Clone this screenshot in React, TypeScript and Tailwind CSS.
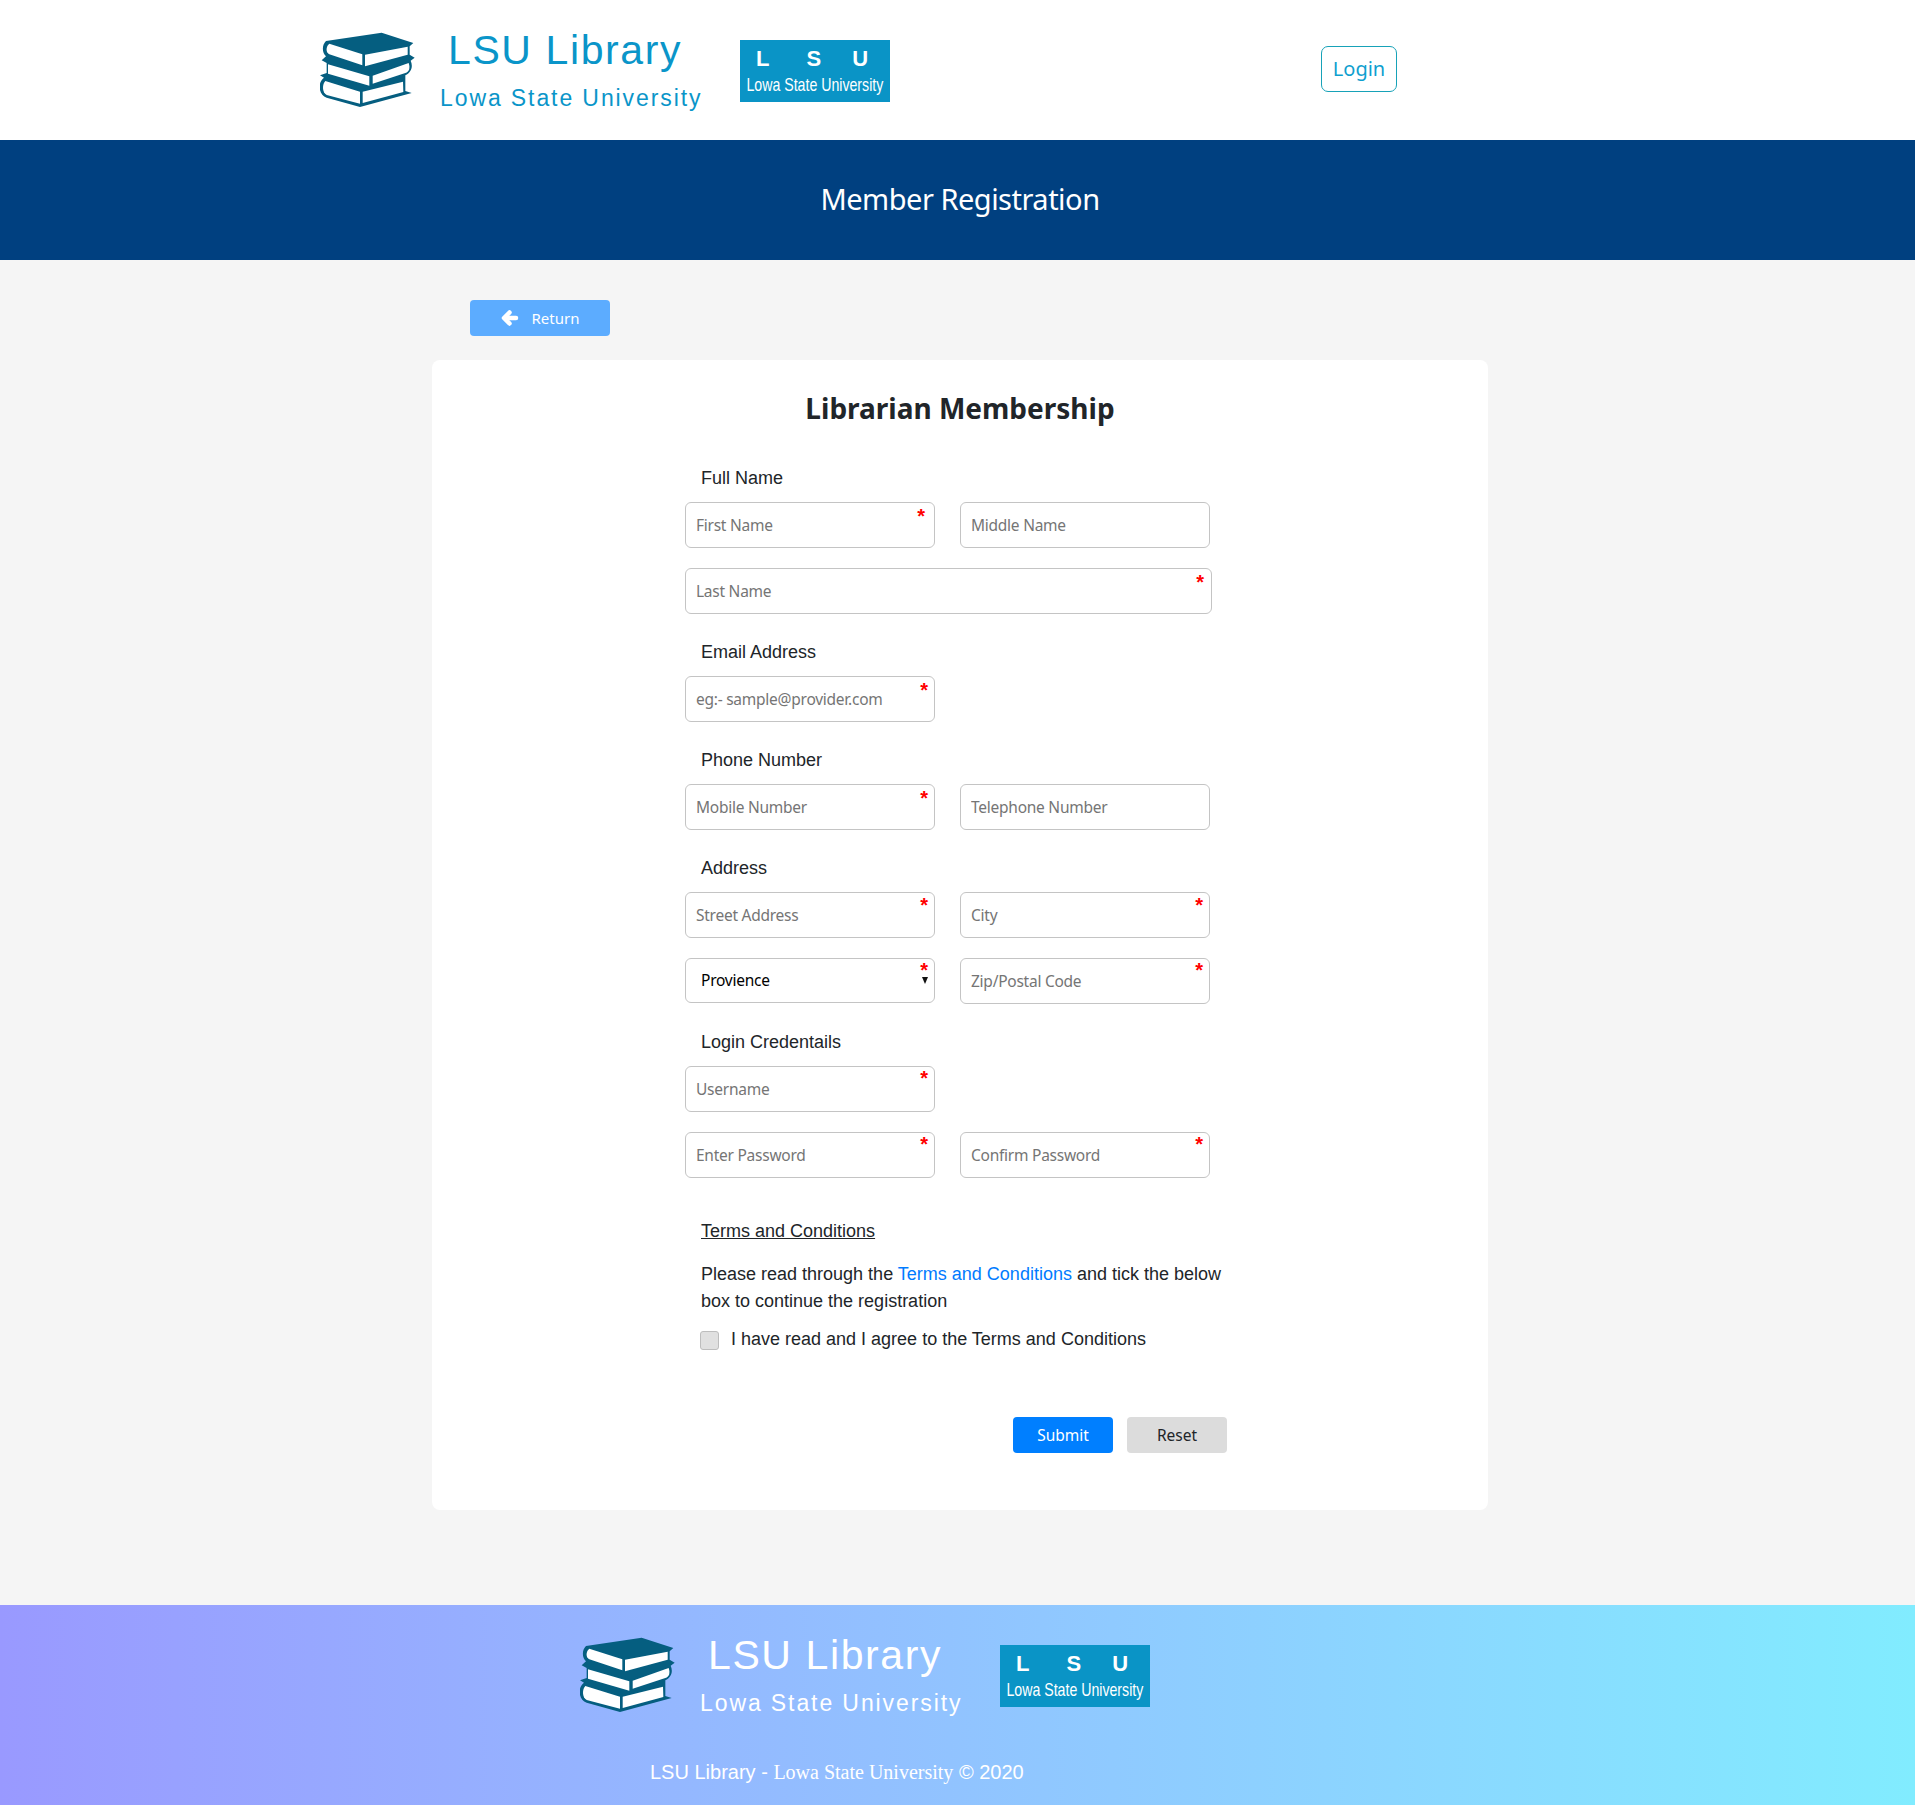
import { useState } from "react";

const uiFont = "font-['Noto_Sans',sans-serif]";
const arial = "font-['Liberation_Sans',sans-serif]";

function BooksIcon() {
  return (
    <svg viewBox="30 35 285 228" className="w-[95px] h-[76px] shrink-0">
      <path
        fill="#055e80"
        d="M48 62 L215 37 L310 68 L299 78 L299 103 L314 112 L302 121 C309 136 306 155 286 165 L286 212 L305 218 L150 260 L50 232 C25 224 22 186 42 172 L30 165 L50 158 L50 128 L35 120 L48 108 C36 98 35 74 48 62 Z"
      />
      <path fill="#fff" d="M58 70 C46 80 48 97 58 102 L157 135 L157 102 Z" />
      <path fill="#fff" d="M165 103 L293 79 L293 103 L165 138 Z" />
      <path fill="#fff" d="M54 132 L178 168 L178 196 L54 160 Z" />
      <path fill="#fff" d="M188 166 L296 128 C301 142 298 154 286 158 L188 190 Z" />
      <path fill="#fff" d="M46 182 L150 214 L150 250 L50 224 C36 216 36 192 46 182 Z" />
      <path fill="#fff" d="M158 214 L279 184 L280 215 L158 248 Z" />
    </svg>
  );
}

function Brand({ light }: { light?: boolean }) {
  const color = light ? "text-white" : "text-[#0a95c9]";
  return (
    <div className={`flex items-center ${arial}`}>
      <BooksIcon />
      <div className={`ml-[25px] w-[265px] pb-[4px] flex flex-col ${color}`}>
        <span className="pl-2 text-[41px] leading-[50px] tracking-[1.6px]">LSU Library</span>
        <span className="mt-[10px] text-[23px] leading-[26px] tracking-[1.9px]">Lowa State University</span>
      </div>
      <div className="ml-[35px] mt-[2px] w-[150px] h-[62px] bg-[#0a94c6] text-white flex flex-col">
        <span className="mt-[6px] pl-[16px] flex text-[22px] leading-[26px] font-bold">
          <span>L</span>
          <span className="ml-[37px]">S</span>
          <span className="ml-[31px]">U</span>
        </span>
        <div className="mt-[1px] flex justify-center">
          <span className="shrink-0 text-[19px] leading-[24px] whitespace-nowrap scale-x-[0.745]">
            Lowa State University
          </span>
        </div>
      </div>
    </div>
  );
}

function Star({ className }: { className: string }) {
  return (
    <span className={`absolute text-[20px] leading-[24px] font-bold text-[#ff0000] ${arial} ${className}`}>*</span>
  );
}

function Field({
  placeholder,
  star,
  wide,
}: {
  placeholder: string;
  star?: string;
  wide?: boolean;
}) {
  return (
    <div className={`relative h-[46px] ${wide ? "w-[527px]" : "w-[250px]"}`}>
      <input
        placeholder={placeholder}
        className={`w-full h-full px-[10px] bg-white border border-[#c4c4c4] rounded-[6px] text-[15.5px] tracking-[-0.25px] text-[#212529] placeholder:text-[#757575] outline-none ${uiFont}`}
      />
      {star && <Star className={star} />}
    </div>
  );
}

function ProvinceSelect() {
  return (
    <div className="relative h-[45px] w-[250px]">
      <select
        defaultValue=""
        className={`w-full h-full pl-[15px] bg-white border border-[#c4c4c4] rounded-[6px] text-[15.5px] tracking-[-0.25px] text-black appearance-none outline-none ${uiFont}`}
      >
        <option value="">Provience</option>
      </select>
      <Star className="right-[7px] top-0" />
      <svg viewBox="0 0 6 7" className="absolute right-[7px] top-[19px] w-[6px] h-[7px]">
        <path d="M0 0 H6 L3 7 Z" fill="#111" />
      </svg>
    </div>
  );
}

function SectionLabel({ children, className }: { children: string; className: string }) {
  return <div className={`pl-[16px] text-[18px] leading-[24px] text-[#212529] ${arial} ${className}`}>{children}</div>;
}

export default function App() {
  const [agreed, setAgreed] = useState(false);

  return (
    <div className="w-full min-h-[1805px] bg-[#f5f5f5]">
      {/* top bar */}
      <header className="h-[140px] bg-white flex items-center pl-[320px]">
        <Brand />
        <button
          className={`ml-[431px] mb-[2px] w-[76px] h-[46px] bg-white border border-[#17a2b8] rounded-[7px] text-[20px] text-[#0f9fcf] ${uiFont}`}
        >
          Login
        </button>
      </header>

      <div
        className={`h-[120px] pl-[5px] pb-[3px] bg-[#004080] flex items-center justify-center text-white text-[29px] tracking-[-0.5px] ${uiFont}`}
      >
        Member Registration
      </div>

      <main className="h-[1345px] pt-[40px]">
        <button
          className={`ml-[470px] w-[140px] h-[36px] bg-[#5cacff] rounded-[4px] text-white text-[15px] flex items-center justify-center gap-[13px] ${uiFont}`}
        >
          <svg viewBox="0 0 18 18" className="w-[18px] h-[18px]" fill="none" stroke="#fff" strokeLinecap="round" strokeLinejoin="round">
            <path strokeWidth="4.5" d="M8.5 3.5 L3 9 L8.5 14.5" />
            <path strokeWidth="4.5" d="M4 9 H15" />
          </svg>
          Return
        </button>

        <section className="ml-[432px] mt-[24px] w-[1056px] h-[1150px] bg-white rounded-[8px] pt-[28px] pl-[253px]">
          <h1 className={`-ml-[253px] text-center text-[28px] leading-[40px] font-bold text-[#212529] ${uiFont}`}>
            Librarian Membership
          </h1>

          <SectionLabel className="mt-[38px] mb-[12px]">Full Name</SectionLabel>
          <div className="flex gap-[25px]">
            <Field placeholder="First Name" star="right-[10px] top-[2px]" />
            <Field placeholder="Middle Name" />
          </div>
          <div className="mt-[20px]">
            <Field placeholder="Last Name" star="right-[8px] top-[2px]" wide />
          </div>

          <SectionLabel className="mt-[26px] mb-[12px]">Email Address</SectionLabel>
          <Field placeholder="eg:- sample@provider.com" star="right-[7px] top-[2px]" />

          <SectionLabel className="mt-[26px] mb-[12px]">Phone Number</SectionLabel>
          <div className="flex gap-[25px]">
            <Field placeholder="Mobile Number" star="right-[7px] top-[2px]" />
            <Field placeholder="Telephone Number" />
          </div>

          <SectionLabel className="mt-[26px] mb-[12px]">Address</SectionLabel>
          <div className="flex gap-[25px]">
            <Field placeholder="Street Address" star="right-[7px] top-[1px]" />
            <Field placeholder="City" star="right-[7px] top-[1px]" />
          </div>
          <div className="mt-[20px] flex gap-[25px]">
            <ProvinceSelect />
            <Field placeholder="Zip/Postal Code" star="right-[7px] top-0" />
          </div>

          <SectionLabel className="mt-[26px] mb-[12px]">Login Credentails</SectionLabel>
          <Field placeholder="Username" star="right-[7px] top-0" />
          <div className="mt-[20px] flex gap-[25px]">
            <Field placeholder="Enter Password" star="right-[7px] top-0" />
            <Field placeholder="Confirm Password" star="right-[7px] top-0" />
          </div>

          <SectionLabel className="mt-[41px] underline">Terms and Conditions</SectionLabel>

          <p className={`mt-[18px] ml-[16px] w-[530px] text-[18px] leading-[27px] text-[#212529] ${arial}`}>
            Please read through the <a className="text-[#007bff]">Terms and Conditions</a> and tick the below
            <br />
            box to continue the registration
          </p>

          <label className={`mt-[12px] ml-[15px] h-[24px] flex items-center gap-[12px] text-[18px] text-[#212529] ${arial}`}>
            <input
              type="checkbox"
              checked={agreed}
              onChange={(e) => setAgreed(e.target.checked)}
              className="w-[19px] h-[19px] mt-[3px] appearance-none bg-[#e0e0e0] border border-[#bdbdbd] rounded-[3px]"
            />
            I have read and I agree to the Terms and Conditions
          </label>

          <div className={`mt-[66px] pl-[328px] flex gap-[14px] text-[15.5px] ${uiFont}`}>
            <button className="w-[100px] h-[36px] pt-[1px] rounded-[4px] bg-[#007fff] text-white">Submit</button>
            <button className="w-[100px] h-[36px] pt-[1px] rounded-[4px] bg-[#dcdcdc] text-[#212529]">Reset</button>
          </div>
        </section>
      </main>

      <footer className="h-[200px] bg-gradient-to-r from-[#9999ff] to-[#81ecff]">
        <div className="h-[140px] flex items-center pl-[580px]">
          <Brand light />
        </div>
        <div className={`pl-[650px] mt-[15px] text-[20px] leading-[24px] text-white ${arial}`}>
          LSU Library - <span className="font-['Liberation_Serif',serif]">Lowa State University</span> © 2020
        </div>
      </footer>
    </div>
  );
}
